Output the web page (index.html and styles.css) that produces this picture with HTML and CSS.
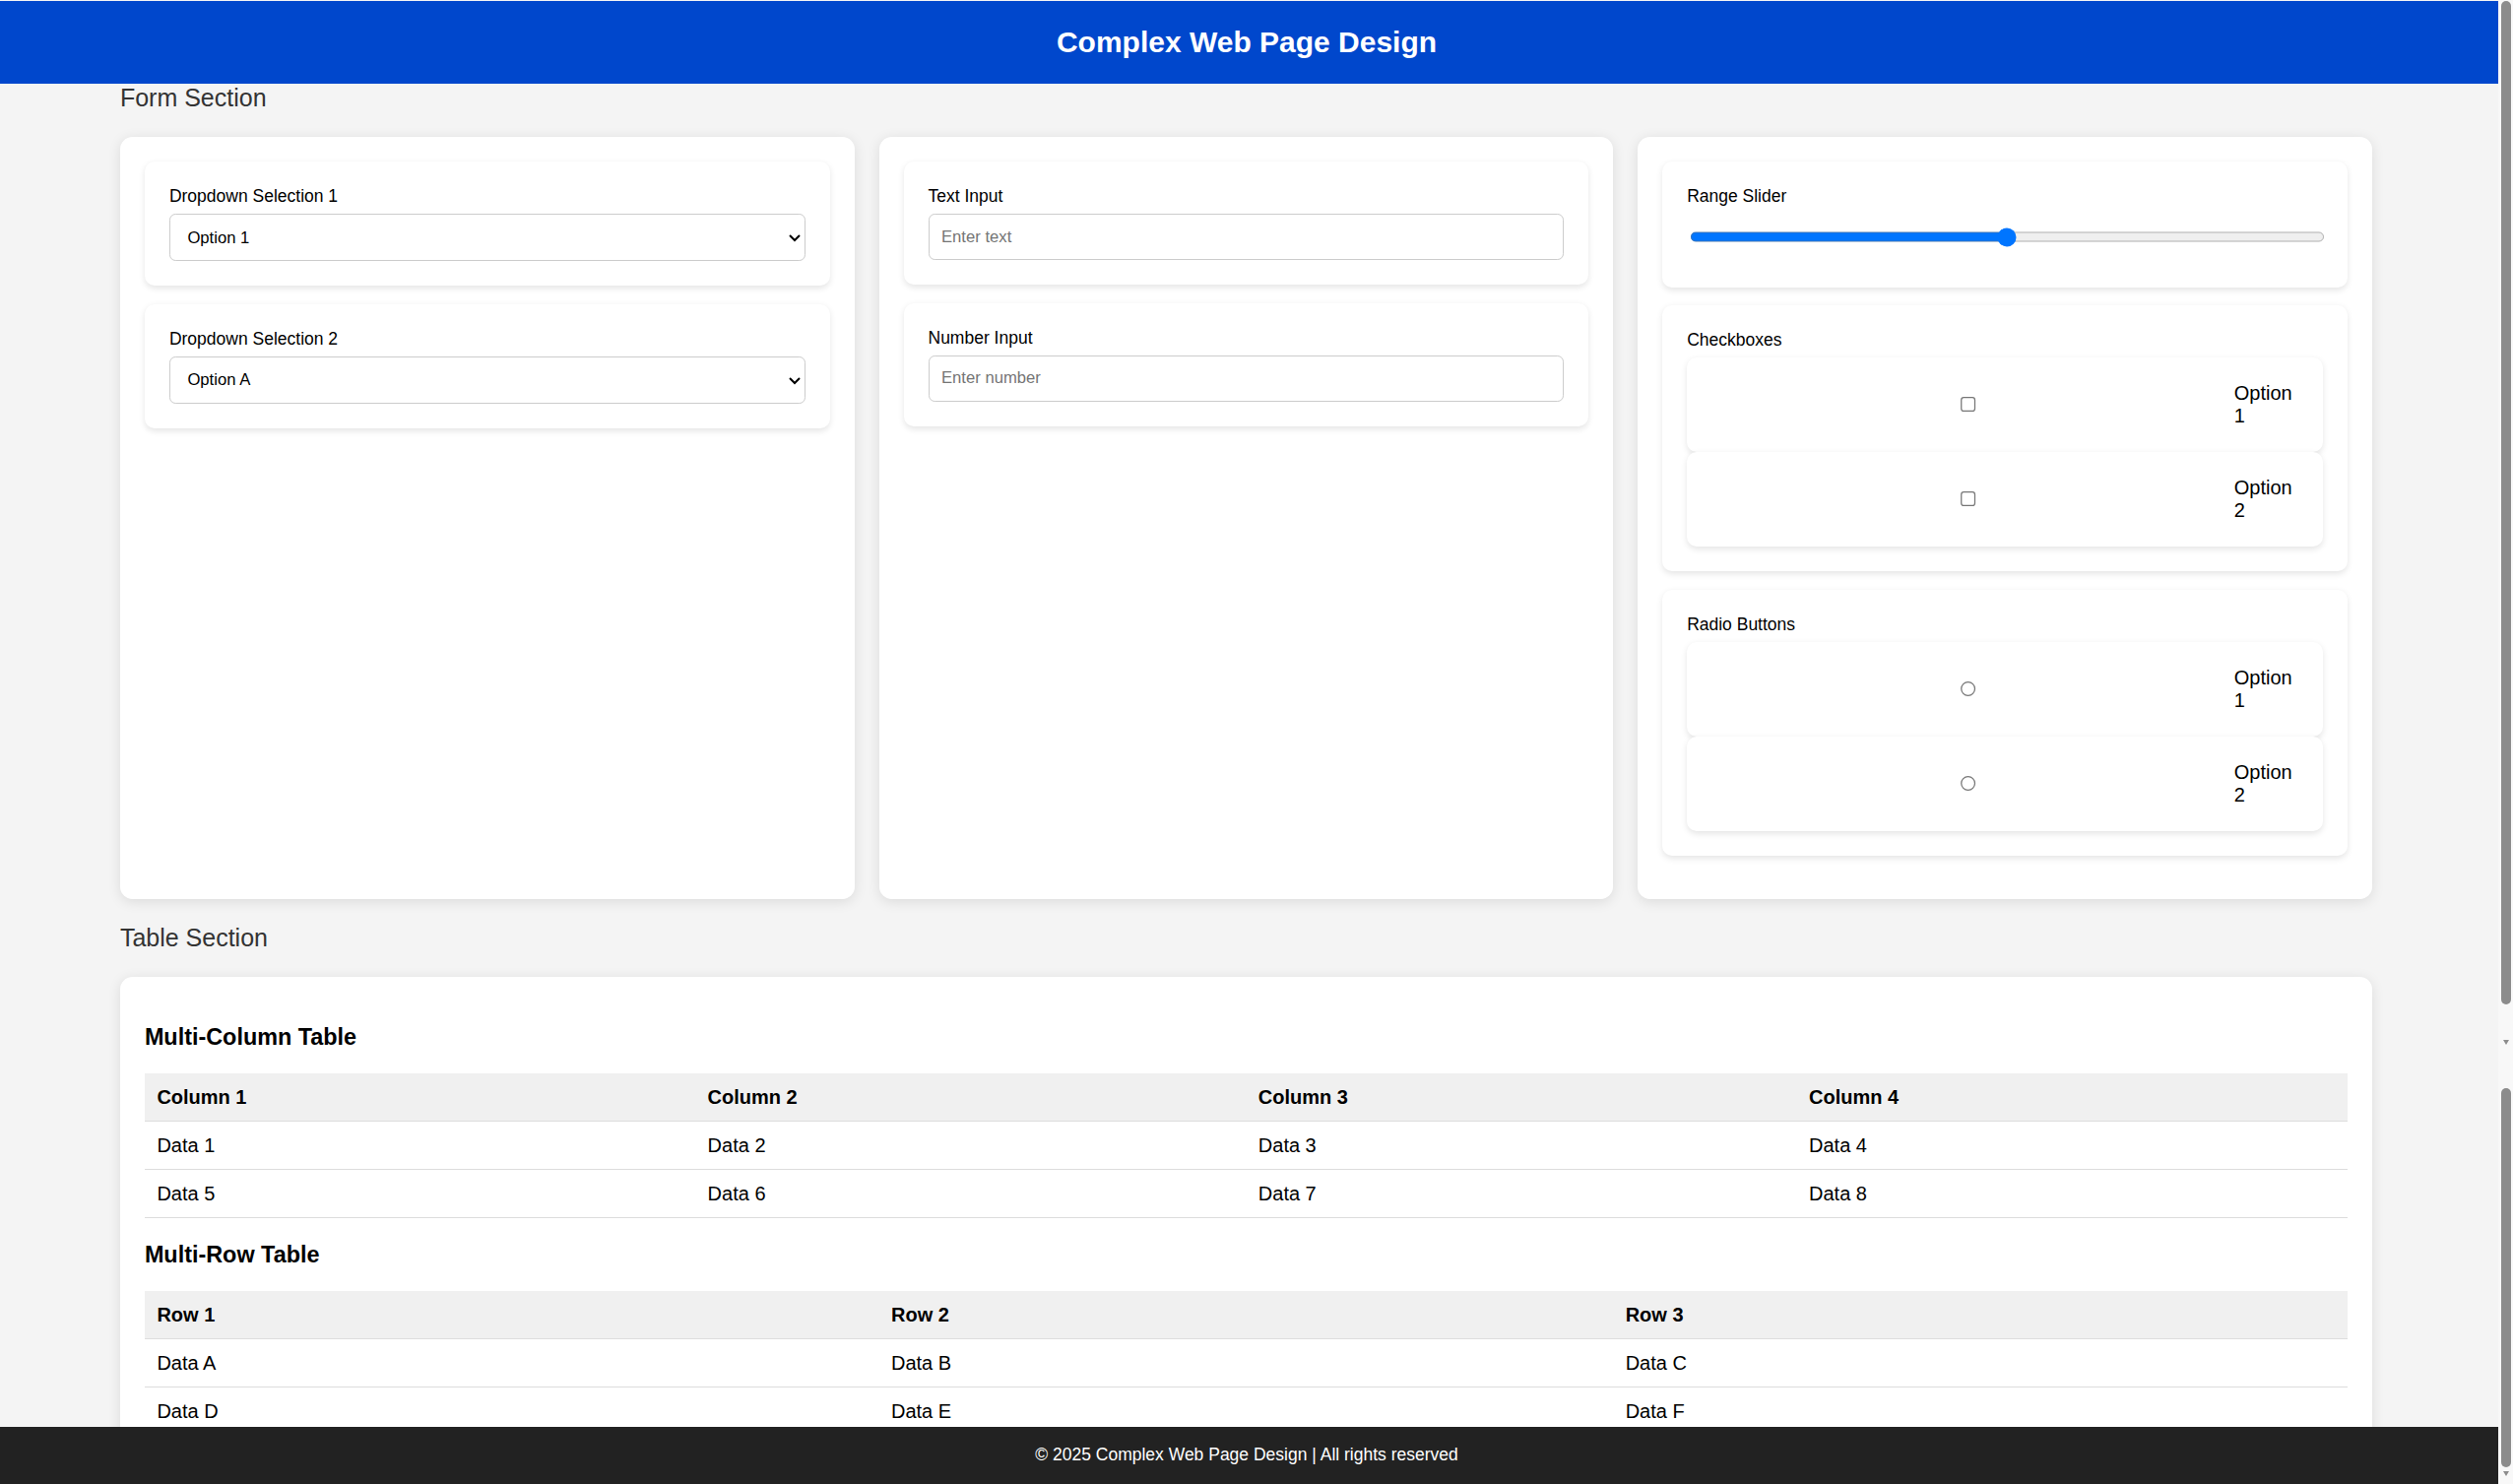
FILE: index.html
```html
<!DOCTYPE html>
<html lang="en">
<head>
<meta charset="UTF-8">
<title>Complex Web Page Design</title>
<link rel="stylesheet" href="styles.css">
</head>
<body>
<header class="site-header">
  <h1 class="site-title">Complex Web Page Design</h1>
</header>

<main class="page">
  <section class="section">
    <h2 class="section-title">Form Section</h2>
    <div class="form-grid">
      <div class="panel">
        <div class="group">
          <label class="group-label" for="dd1">Dropdown Selection 1</label>
          <select id="dd1" class="field">
            <option>Option 1</option>
            <option>Option 2</option>
            <option>Option 3</option>
          </select>
        </div>
        <div class="group">
          <label class="group-label" for="dd2">Dropdown Selection 2</label>
          <select id="dd2" class="field">
            <option>Option A</option>
            <option>Option B</option>
            <option>Option C</option>
          </select>
        </div>
      </div>

      <div class="panel">
        <div class="group">
          <label class="group-label" for="txt">Text Input</label>
          <input id="txt" class="field" type="text" placeholder="Enter text">
        </div>
        <div class="group">
          <label class="group-label" for="num">Number Input</label>
          <input id="num" class="field" type="number" placeholder="Enter number">
        </div>
      </div>

      <div class="panel">
        <div class="group">
          <label class="group-label" for="rng">Range Slider</label>
          <input id="rng" class="range" type="range" min="0" max="100" value="50">
        </div>
        <div class="group">
          <span class="group-label">Checkboxes</span>
          <label class="option"><input class="option-input" type="checkbox"><span class="option-text">Option 1</span></label>
          <label class="option"><input class="option-input" type="checkbox"><span class="option-text">Option 2</span></label>
        </div>
        <div class="group">
          <span class="group-label">Radio Buttons</span>
          <label class="option"><input class="option-input" type="radio" name="r"><span class="option-text">Option 1</span></label>
          <label class="option"><input class="option-input" type="radio" name="r"><span class="option-text">Option 2</span></label>
        </div>
      </div>
    </div>
  </section>

  <section class="section">
    <h2 class="section-title">Table Section</h2>
    <div class="panel">
      <h3 class="table-title">Multi-Column Table</h3>
      <table class="data-table">
        <thead>
          <tr><th>Column 1</th><th>Column 2</th><th>Column 3</th><th>Column 4</th></tr>
        </thead>
        <tbody>
          <tr><td>Data 1</td><td>Data 2</td><td>Data 3</td><td>Data 4</td></tr>
          <tr><td>Data 5</td><td>Data 6</td><td>Data 7</td><td>Data 8</td></tr>
        </tbody>
      </table>
      <h3 class="table-title">Multi-Row Table</h3>
      <table class="data-table">
        <thead>
          <tr><th>Row 1</th><th>Row 2</th><th>Row 3</th></tr>
        </thead>
        <tbody>
          <tr><td>Data A</td><td>Data B</td><td>Data C</td></tr>
          <tr><td>Data D</td><td>Data E</td><td>Data F</td></tr>
        </tbody>
      </table>
    </div>
  </section>
</main>

<footer class="site-footer">© 2025 Complex Web Page Design | All rights reserved</footer>

<div class="scrollbar" aria-hidden="true">
  <div class="scroll-thumb scroll-thumb-top"></div>
  <div class="scroll-arrow scroll-arrow-mid"></div>
  <div class="scroll-thumb scroll-thumb-bottom"></div>
  <div class="scroll-arrow scroll-arrow-end"></div>
</div>
</body>
</html>
```

FILE: styles.css
```css
html {
  zoom: 1.25;
}

*,
*::before,
*::after {
  box-sizing: border-box;
}

body {
  margin: 0 12px 0 0;
  padding-top: 1px;
  font-family: "Liberation Sans", Arial, sans-serif;
  background: #f4f4f4;
  color: #000;
}

.site-header {
  background: #0047cc;
  color: #fff;
  text-align: center;
  padding: 20px 24px 20px 20px;
}

.site-title {
  margin: 0;
  font-size: 24px;
  font-weight: bold;
}

.page {
  margin-left: 97.5px;
  width: 1829.5px;
  padding-bottom: 60px;
}

.section {
  margin-bottom: 20px;
}

.section-title {
  margin: 0 0 20px;
  font-size: 20px;
  font-weight: normal;
  color: #333;
}

.form-grid {
  display: grid;
  grid-template-columns: repeat(3, 1fr);
  gap: 20px;
}

.panel {
  background: #fff;
  padding: 20px;
  border-radius: 10px;
  box-shadow: 0 2px 10px rgba(0, 0, 0, 0.1);
}

.group {
  background: #fff;
  padding: 20px;
  border-radius: 8px;
  box-shadow: 0 2px 5px rgba(0, 0, 0, 0.1);
  margin-bottom: 15px;
}

.group-label {
  display: block;
  font-size: 14px;
  margin-bottom: 5.5px;
}

.field {
  display: block;
  width: 100%;
  padding: 10px;
  border: 1px solid #ccc;
  border-radius: 5px;
  background: #fff;
  margin: 0;
}

.range {
  display: block;
  width: 100%;
  height: 37.6px;
  margin: 2px;
}

.option {
  display: flex;
  align-items: center;
  padding: 20px;
  background: #fff;
  border-radius: 8px;
  box-shadow: 0 2px 5px rgba(0, 0, 0, 0.1);
  font-size: 16px;
}

.option-input {
  width: 100%;
  padding: 10px;
  margin: 3px 11px 3px 4px;
}

.table-title {
  font-size: 18.72px;
  margin: 18.72px 0;
}

.data-table {
  width: 100%;
  table-layout: fixed;
  border-collapse: collapse;
  font-size: 16px;
}

.data-table th,
.data-table td {
  padding: 10px;
  text-align: left;
  border-bottom: 1px solid #ddd;
}

.data-table th {
  background: #f0f0f0;
  font-weight: bold;
}

.site-footer {
  position: fixed;
  left: 0;
  right: 12px;
  bottom: 0;
  background: #222;
  color: #fff;
  text-align: center;
  padding: 15px 19px 15px 15px;
  font-size: 14px;
}

/* browser scrollbar as seen in the screenshot */
.scrollbar {
  position: fixed;
  top: 0;
  right: 0;
  bottom: 0;
  width: 12px;
  background: #f8f8f8;
}

.scroll-thumb {
  position: absolute;
  left: 2.4px;
  width: 8px;
  background: #8c8c8c;
  border-radius: 4px;
}

.scroll-thumb-top {
  top: 0.8px;
  height: 815px;
}

.scroll-thumb-bottom {
  top: 884px;
  height: 308px;
}

.scroll-arrow {
  position: absolute;
  left: 3.6px;
  width: 0;
  height: 0;
  border-left: 2.8px solid transparent;
  border-right: 2.8px solid transparent;
  border-top: 4px solid #8c8c8c;
}

.scroll-arrow-mid {
  top: 845px;
}

.scroll-arrow-end {
  top: 1195px;
}
```
